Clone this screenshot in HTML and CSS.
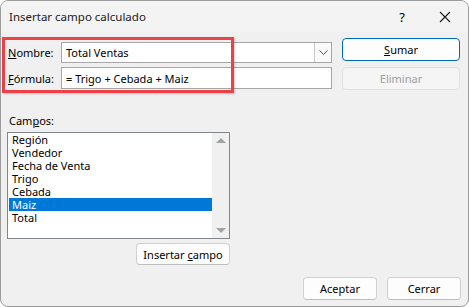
FILE: index.html
```html
<!DOCTYPE html>
<html lang="es">
<head>
    <meta charset="UTF-8">
    <title>Insertar campo calculado</title>
    <link rel="stylesheet" href="styles.css">
</head>
<body>
    <div class="dialog">
        <!-- barra de titulo -->
        <div class="titlebar">
            <span class="title">Insertar campo calculado</span>
            <span class="help">?</span>
            <span class="close">
                <svg width="12" height="12" viewBox="0 0 12 12"><path d="M1 1L11 11M11 1L1 11" stroke="#1a1a1a" stroke-width="1.1" fill="none"/></svg>
            </span>
        </div>

        <div class="top">
            <div class="fields">
                <div class="row">
                    <label><u>N</u>ombre:</label>
                    <div class="input combo">
                        <span>Total Ventas</span>
                        <span class="drop">
                            <svg width="9" height="5" viewBox="0 0 9 5"><path d="M0.5 0.5L4.5 4.5L8.5 0.5" stroke="#555" stroke-width="1" fill="none"/></svg>
                        </span>
                    </div>
                </div>
                <div class="row">
                    <label><u>F</u>órmula:</label>
                    <div class="input tall"><span>= Trigo + Cebada + Maiz</span></div>
                </div>
                <div class="highlight"></div>
            </div>
            <div class="side">
                <button class="btn primary"><u>S</u>umar</button>
                <button class="btn disabled">Eliminar</button>
            </div>
        </div>

        <div class="campos">
            <div class="campos-label">Cam<u>p</u>os:</div>
            <div class="listbox">
                <ul class="items">
                    <li>Región</li>
                    <li>Vendedor</li>
                    <li>Fecha de Venta</li>
                    <li>Trigo</li>
                    <li>Cebada</li>
                    <li class="selected">Maiz</li>
                    <li>Total</li>
                </ul>
                <div class="scroll">
                    <span class="arrow up"></span>
                    <span class="arrow down"></span>
                </div>
            </div>
            <div class="insert-row">
                <button class="btn insert">Insertar <u>c</u>ampo</button>
            </div>
        </div>

        <div class="footer">
            <button class="btn foot">Aceptar</button>
            <button class="btn foot">Cerrar</button>
        </div>
    </div>
</body>
</html>
```

FILE: styles.css
```css
* {
    box-sizing: border-box;
}
body {
    margin: 0;
    background: #ffffff;
    font-family: 'Noto Sans', 'Liberation Sans', sans-serif;
    font-size: 11px;
    color: #000;
}
.dialog {
    width: 469px;
    height: 307px;
    border: 1px solid #9c9c9c;
    border-radius: 8px;
    background: #f0f0f0;
    overflow: hidden;
    position: relative;
}
.titlebar {
    height: 31px;
    display: flex;
    align-items: center;
    padding-left: 8px;
    background: #f3f3f3;
}
.title {
    flex: 1;
    font-size: 11.5px;
    color: #1a1a1a;
}
.help {
    width: 16px;
    text-align: center;
    font-size: 13px;
    margin-right: 29px;
}
.close {
    width: 12px;
    height: 12px;
    display: flex;
    margin-right: 17px;
}

/* parte superior */
.top {
    display: flex;
    align-items: flex-start;
    padding-left: 7px;
}
.fields {
    position: relative;
    display: flex;
    flex-direction: column;
    gap: 4px;
    margin-top: 10px;
}
.row {
    display: flex;
    align-items: center;
}
.row label {
    width: 53px;
}
.input {
    width: 271px;
    height: 21px;
    background: #fff;
    border: 1px solid #a6a6a6;
    display: flex;
    align-items: center;
    padding-left: 4px;
}
.input.tall {
    height: 22px;
}
.combo span:first-child {
    flex: 1;
}
.drop {
    width: 17px;
    height: 19px;
    border-left: 1px solid #c8c8c8;
    display: flex;
    align-items: center;
    justify-content: center;
    background: #fafafa;
}
.highlight {
    position: absolute;
    left: -6px;
    top: -5px;
    width: 232px;
    height: 56px;
    border: 3px solid #ec4148;
    box-shadow: 1px 1px 2px rgba(0, 0, 0, 0.2);
}
.side {
    display: flex;
    flex-direction: column;
    gap: 6px;
    margin-left: 10px;
    margin-top: 6px;
}
.btn {
    font-family: inherit;
    font-size: 11px;
    color: #000;
    background: #fdfdfd;
    border: 1px solid #d0d0d0;
    border-bottom-color: #bdbdbd;
    border-radius: 4px;
    padding: 0;
}
.side .btn {
    width: 118px;
    height: 23px;
}
.btn.primary {
    border: 1px solid #0067c0;
    box-shadow: inset 0 0 0 1px #ffffff;
}
.btn.disabled {
    background: #f5f5f5;
    color: #9d9d9d;
    border-color: #e0e0e0;
}

/* lista de campos */
.campos {
    padding-left: 6px;
    width: 229px;
}
.campos-label {
    margin-top: 23px;
    padding-left: 2px;
    height: 19px;
}
.listbox {
    width: 223px;
    height: 107px;
    border: 1px solid #82878f;
    background: #fff;
    display: flex;
}
.items {
    list-style: none;
    margin: 0;
    padding: 0 0 0 1px;
    flex: 1;
}
.items li {
    height: 13px;
    line-height: 13px;
    padding-left: 3px;
}
.items li.selected {
    background: #0078d7;
    color: #fff;
}
.scroll {
    width: 17px;
    background: #f0f0f0;
    display: flex;
    flex-direction: column;
    justify-content: space-between;
    align-items: center;
    padding: 5px 0;
}
.arrow {
    width: 0;
    height: 0;
    border-left: 5px solid transparent;
    border-right: 5px solid transparent;
}
.arrow.up {
    border-bottom: 5px solid #a3a3a3;
}
.arrow.down {
    border-top: 5px solid #a3a3a3;
}
.insert-row {
    display: flex;
    justify-content: flex-end;
    margin-top: 4px;
}
.btn.insert {
    width: 94px;
    height: 22px;
}

/* botones inferiores */
.footer {
    display: flex;
    justify-content: flex-end;
    gap: 10px;
    padding-right: 7px;
    margin-top: 12px;
}
.btn.foot {
    width: 74px;
    height: 23px;
}
```
